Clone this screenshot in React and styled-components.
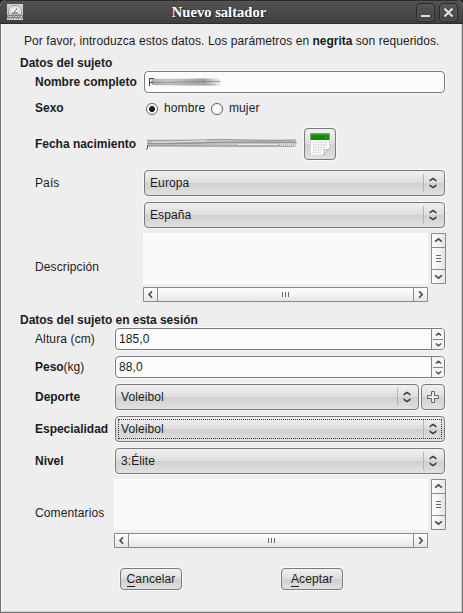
import React from 'react';
import styled, { createGlobalStyle, css } from 'styled-components';

const GlobalStyle = createGlobalStyle`
  * { box-sizing: border-box; }
  body { margin: 0; background: #1f1f1f; overflow: hidden; }
  button { padding: 0; margin: 0; font: inherit; letter-spacing: inherit; color: inherit; }
  b { letter-spacing: -0.03px; }
`;

const Window = styled.main`
  width: 463px;
  height: 613px;
  display: flex;
  flex-direction: column;
  font: 12px/16px 'Liberation Sans', Arial, sans-serif;
  letter-spacing: 0.1px;
  color: #1c1c1c;
  background: #eeeeee;
  border-radius: 6px 6px 0 0;
  overflow: hidden;
`;

const TitleBar = styled.header`
  flex: none;
  height: 24px;
  display: grid;
  grid-template-columns: 46px 1fr 48px;
  align-items: center;
  padding: 0 5px 0 7px;
  background: linear-gradient(#525252, #3f3f3f);
  border-top: 1px solid #2d2d2d;
  border-bottom: 1px solid #2b2b2b;
`;

const Title = styled.h1`
  margin: 0 25px 0 0;
  text-align: center;
  font: bold 14.6px/20px 'Liberation Serif', 'Times New Roman', serif;
  letter-spacing: 0;
  color: #fff;
  text-shadow: 1px 1px 1px #222;
`;

const WindowButtons = styled.div`
  display: flex;
  gap: 4px;
  justify-content: flex-end;
`;

const WindowButton = styled.button`
  width: 19px;
  height: 19px;
  display: grid;
  place-items: center;
  border: 1px solid #292929;
  border-radius: 4px;
  background: linear-gradient(#555, #444);
  box-shadow: inset 0 0 0 1px #575757;
`;

const Content = styled.form`
  flex: 1;
  display: flex;
  flex-direction: column;
  padding: 9px 17px 0 19px;
  border: solid #707070;
  border-width: 0 1px 1px;
  box-shadow: inset 1px 0 #f9f9f9, inset -1px -1px #cfcfcf;
`;

const Intro = styled.p`
  margin: 0 0 0 4px;
  height: 16px;
  white-space: nowrap;
  letter-spacing: 0.07px;
`;

const Section = styled.h2`
  margin: ${(p) => p.$top}px 0 0;
  height: 16px;
  font-size: 12px;
  line-height: 16px;
  letter-spacing: -0.03px;
`;

const Row = styled.div`
  display: grid;
  grid-template-columns: ${(p) => p.$label}px 1fr;
  align-items: center;
  height: ${(p) => p.$height}px;
  margin: ${(p) => p.$top}px 0 0 15px;
`;

const Label = styled.label`
  white-space: nowrap;
  font-weight: ${(p) => (p.$required ? 'bold' : 'normal')};
  letter-spacing: ${(p) => (p.$required ? '-0.02px' : '0.12px')};
  padding-bottom: ${(p) => (p.$raised ? 2 : 0)}px;
`;

const Plain = styled.span`
  font-weight: normal;
`;

const field = css`
  border: 1px solid #7b7b7b;
  border-radius: 4px;
  box-shadow: 0 0 0 1px #f7f7f7;
`;

const Entry = styled.div`
  ${field}
  height: 22px;
  display: flex;
  align-items: center;
  padding-left: 3px;
  background: #fbfbfb;
  overflow: clip;
`;

const SpinValue = styled.span`
  flex: 1;
`;

const SpinButtons = styled.div`
  width: 13px;
  height: 20px;
  display: grid;
  grid-template-rows: 1fr 1fr;
  place-items: center;
  border-left: 1px solid #858585;
  background: linear-gradient(#858585, #858585) 1px 10px / 10px 1px no-repeat, #f5f5f5;
`;

const raised = css`
  ${field}
  background: linear-gradient(#f0f0f0 0%, #dededd 49%, #d0cfcd 50%, #e2e1e0 100%);
`;

const Combo = styled.div`
  ${raised}
  height: 26px;
  display: flex;
  align-items: center;
  justify-content: space-between;
  padding: ${(p) => (p.$focused ? '0 1px 0 2px' : '0 0 0 5px')};
`;

const ComboInner = styled.div`
  flex: 1;
  height: 20px;
  display: flex;
  align-items: center;
  justify-content: space-between;
  ${(p) => p.$focused && 'border: 1px dotted #333; padding-left: 2px; margin-right: 1px;'}
`;

const ComboHandle = styled.span`
  width: ${(p) => (p.$focused ? 18 : 21)}px;
  height: 18px;
  display: grid;
  align-items: center;
  padding-left: 5px;
  border-left: 1px solid #b5b5b3;
`;

const SportPicker = styled.div`
  display: grid;
  grid-template-columns: 1fr 24px;
  gap: 2px;
`;

const IconButton = styled.button`
  ${raised}
  width: ${(p) => p.$width}px;
  height: ${(p) => p.$height}px;
  display: grid;
  place-items: center;
`;

const Options = styled.div`
  display: flex;
  align-items: center;
  padding-left: 2px;
`;

const Option = styled.span`
  display: flex;
  align-items: center;
  gap: 6px;
  width: 65px;
`;

const Radio = styled.span`
  flex: none;
  width: 12px;
  height: 12px;
  margin-top: 2px;
  border: 1px solid #696969;
  border-radius: 50%;
  background: ${(p) => (p.$checked ? 'radial-gradient(circle, #181818 0 2.6px, #fafafa 3.4px)' : '#fafafa')};
  box-shadow: 0 0 0 0.5px #d8d8d8;
`;

const DateField = styled.div`
  display: grid;
  grid-template-columns: 160px 32px;
  align-items: center;
`;

const ScrollArea = styled.div`
  display: grid;
  grid-template-columns: 1fr 15px;
  grid-template-rows: 51px 15px;
  gap: 3px;
  margin: 0 -1px;
`;

const TextPane = styled.div`
  background: #fafafa;
`;

const ScrollBar = styled.div`
  display: grid;
  ${(p) => (p.$vertical ? 'grid-template-rows: 13px 1fr 13px;' : 'grid-template-columns: 13px 1fr 13px;')}
  gap: 1px;
  padding: 1px;
  border-radius: 1px;
  background: #8b8b80;
`;

const ScrollPart = styled.span`
  display: grid;
  place-items: center;
  background: linear-gradient(${(p) => (p.$vertical ? 'to right' : 'to bottom')}, #fdfdfd, #f4f4f4 50%, #e5e5e5);
`;

const Actions = styled.div`
  display: flex;
  gap: 99px;
  margin: 20px 0 0 100px;
`;

const ActionButton = styled.button`
  ${raised}
  width: 62px;
  height: 22px;
`;

const Mnemonic = styled.span`
  border-bottom: 1px solid currentColor;
`;

const Svg = styled.svg`
  display: block;
  overflow: visible;
`;

const ChevronPaths = {
  up: 'M1.2 5.7 4.5 2.8 7.8 5.7',
  down: 'M1.2 3.3 4.5 6.2 7.8 3.3',
  left: 'M6 1.3 3.1 4.5 6 7.7',
  right: 'M3.2 1.3 6.1 4.5 3.2 7.7',
};

const Chevron = ({ dir, size = 9 }) => (
  <Svg width={size} height={size} viewBox="0 0 9 9" fill="none" stroke="#4a4a4a" strokeWidth="1.7">
    <path d={ChevronPaths[dir]} />
  </Svg>
);

const Arrows = () => (
  <Svg width="8" height="12" viewBox="0 0 8 12" fill="none" stroke="#3a3a3a" strokeWidth="1.5">
    <path d="M1.2 4.2V3.4L4 1.4 6.8 3.4V4.2M1.2 7.8v.8L4 10.6 6.8 8.6V7.8" />
  </Svg>
);

const Grip = ({ vertical }) => (
  <Svg width="7" height="7" viewBox="0 0 7 7" stroke="#666" shapeRendering="crispEdges">
    <path d={vertical ? 'M1 .5h5M1 3.5h5M1 6.5h5' : 'M.5 1v5M3.5 1v5M6.5 1v5'} />
  </Svg>
);

const GaugeIcon = () => (
  <Svg width="16" height="16" viewBox="0 0 16 16">
    <path fill="#c9d0d3" d="M0 0h16v16H0z" />
    <path fill="#f3f3f1" stroke="#8c9295" d="M1.5 10C1 4 4 1.5 8 1.5S15 4 14.5 10z" />
    <path fill="none" stroke="#999" strokeDasharray="1 1.5" d="M3.5 8C4 5 5.5 3.5 8 3.5S12 5 12.5 8" />
    <path fill="none" stroke="#c46a50" strokeWidth="1.2" d="M7.5 8 10 4.5" />
    <path fill="#999" d="M5 8h6v2H5z" />
    <path fill="#78858e" d="M0 11h16v4H0z" />
    <path stroke="#ccd2d5" strokeDasharray="1 1 2 1" d="M1 12.5h14M0 14.5h16" />
  </Svg>
);

const CalendarIcon = () => (
  <Svg width="20" height="24" viewBox="0 0 20 24">
    <path fill="#fff" stroke="#d0d0d0" strokeWidth=".7" d="M.5 2h19v15l-6 6H.5z" />
    <path fill="#14890f" d="M.5 1.5h19V8H.5z" />
    <path fill="#32a829" d="M.5 1.5h19V3H.5z" />
    <path stroke="#4bb043" d="M15 5.5h2" />
    <path stroke="#c9c9c9" strokeWidth="1.4" strokeDasharray="1.4 1.1" d="M3 10.5h14M3 13h14M3 15.5h13M3 18h10M3 20.5h8" />
    <path fill="#ececec" stroke="#999" strokeWidth=".7" d="M13.5 23c1-2 .8-3.5.3-5.5 2 .5 4 .3 5.7-1z" />
  </Svg>
);

const PlusIcon = () => (
  <Svg width="12" height="12" viewBox="0 0 12 12">
    <path fill="#e9e9e9" stroke="#666" d="M4.5.5h3v4h4v3h-4v4h-3v-4h-4v-3h4z" />
  </Svg>
);

const NameSmudge = () => (
  <Svg width="75" height="12" viewBox="0 0 75 12" fill="none">
    <defs>
      <linearGradient id="nameFade">
        <stop offset="0" stopColor="#999" />
        <stop offset=".25" stopColor="#bbb" />
        <stop offset=".75" stopColor="#888" />
        <stop offset="1" stopColor="#bbb" stopOpacity=".2" />
      </linearGradient>
    </defs>
    <path fill="url(#nameFade)" opacity=".8" d="M3 2.5C25 3.5 46 2 70 2.5l4 3-3 4.5C50 9.5 25 10 4 9z" />
    <path stroke="#777" opacity=".6" d="M3 6.5C22 7 48 5 72 5.5" />
    <path stroke="#aaa" opacity=".6" d="M6 8.5h62" />
    <path stroke="#444" d="M1.5 10V2M1 2.5h5M1 6.5h4" />
  </Svg>
);

const DateSmudge = () => (
  <Svg width="154" height="14" viewBox="0 0 154 14" fill="none">
    <path fill="#c2c2c2" d="M3 2.5h148l2 3.5-2 4H4z" />
    <path stroke="#999" d="M3 3.5C50 4.5 60 2 82 2.5s50 1.5 70 .5M4 8.5c35 0 67 1 147 .5" />
    <path stroke="#888" strokeWidth="1.4" opacity=".8" d="M3 6.5C42 7 81 4 152 5.5" />
    <path stroke="#e6e6e6" d="M8 5C30 5.5 42 4 62 3.8M94 7.5h40" />
    <path stroke="#ddd" strokeWidth="3" strokeDasharray="1 1" d="M136 7.5h15" />
    <path stroke="#555" d="M3.5 8v3.5l-1.5 1" />
  </Svg>
);

const Select = ({ children, focused }) => (
  <Combo $focused={focused}>
    <ComboInner $focused={focused}>
      <span>{children}</span>
      <ComboHandle $focused={focused}><Arrows /></ComboHandle>
    </ComboInner>
  </Combo>
);

const Spin = ({ children }) => (
  <Entry>
    <SpinValue>{children}</SpinValue>
    <SpinButtons>
      <Chevron dir="up" size={7} />
      <Chevron dir="down" size={7} />
    </SpinButtons>
  </Entry>
);

const Bar = ({ vertical }) => (
  <ScrollBar $vertical={vertical}>
    <ScrollPart $vertical={vertical}><Chevron dir={vertical ? 'up' : 'left'} /></ScrollPart>
    <ScrollPart $vertical={vertical}><Grip vertical={vertical} /></ScrollPart>
    <ScrollPart $vertical={vertical}><Chevron dir={vertical ? 'down' : 'right'} /></ScrollPart>
  </ScrollBar>
);

const ScrolledText = () => (
  <ScrollArea>
    <TextPane />
    <Bar vertical />
    <Bar />
  </ScrollArea>
);

export default function App() {
  return (
    <>
      <GlobalStyle />
      <Window>
        <TitleBar>
          <GaugeIcon />
          <Title>Nuevo saltador</Title>
          <WindowButtons>
            <WindowButton type="button">
              <Svg width="11" height="11" stroke="#ddd" strokeWidth="2"><path d="M1 9h9" /></Svg>
            </WindowButton>
            <WindowButton type="button">
              <Svg width="11" height="11" stroke="#ddd" strokeWidth="2.2"><path d="m1.5 1.5 8 8m0-8-8 8" /></Svg>
            </WindowButton>
          </WindowButtons>
        </TitleBar>
        <Content>
          <Intro>
            Por favor, introduzca estos datos. Los parámetros en <b>negrita</b> son requeridos.
          </Intro>
          <Section $top={6}>Datos del sujeto</Section>
          <Row $label={109} $height={22} $top={0}>
            <Label $required>Nombre completo</Label>
            <Entry><NameSmudge /></Entry>
          </Row>
          <Row $label={109} $height={16} $top={7}>
            <Label $required>Sexo</Label>
            <Options>
              <Option><Radio $checked />hombre</Option>
              <Option><Radio />mujer</Option>
            </Options>
          </Row>
          <Row $label={109} $height={32} $top={12}>
            <Label $required>Fecha nacimiento</Label>
            <DateField>
              <DateSmudge />
              <IconButton type="button" $width={32} $height={32}><CalendarIcon /></IconButton>
            </DateField>
          </Row>
          <Row $label={109} $height={26} $top={10}>
            <Label>País</Label>
            <Select>Europa</Select>
          </Row>
          <Row $label={109} $height={26} $top={6}>
            <span />
            <Select>España</Select>
          </Row>
          <Row $label={109} $height={69} $top={5}>
            <Label $raised>Descripción</Label>
            <ScrolledText />
          </Row>
          <Section $top={10}>Datos del sujeto en esta sesión</Section>
          <Row $label={80} $height={22} $top={0}>
            <Label>Altura (cm)</Label>
            <Spin>185,0</Spin>
          </Row>
          <Row $label={80} $height={22} $top={6}>
            <Label $required>Peso<Plain>(kg)</Plain></Label>
            <Spin>88,0</Spin>
          </Row>
          <Row $label={80} $height={26} $top={6}>
            <Label $required>Deporte</Label>
            <SportPicker>
              <Select>Voleibol</Select>
              <IconButton type="button" $width={24} $height={26}><PlusIcon /></IconButton>
            </SportPicker>
          </Row>
          <Row $label={80} $height={26} $top={6}>
            <Label $required>Especialidad</Label>
            <Select focused>Voleibol</Select>
          </Row>
          <Row $label={80} $height={26} $top={6}>
            <Label $required>Nivel</Label>
            <Select>3:Élite</Select>
          </Row>
          <Row $label={80} $height={69} $top={5}>
            <Label $raised>Comentarios</Label>
            <ScrolledText />
          </Row>
          <Actions>
            <ActionButton type="button"><Mnemonic>C</Mnemonic>ancelar</ActionButton>
            <ActionButton type="button"><Mnemonic>A</Mnemonic>ceptar</ActionButton>
          </Actions>
        </Content>
      </Window>
    </>
  );
}
